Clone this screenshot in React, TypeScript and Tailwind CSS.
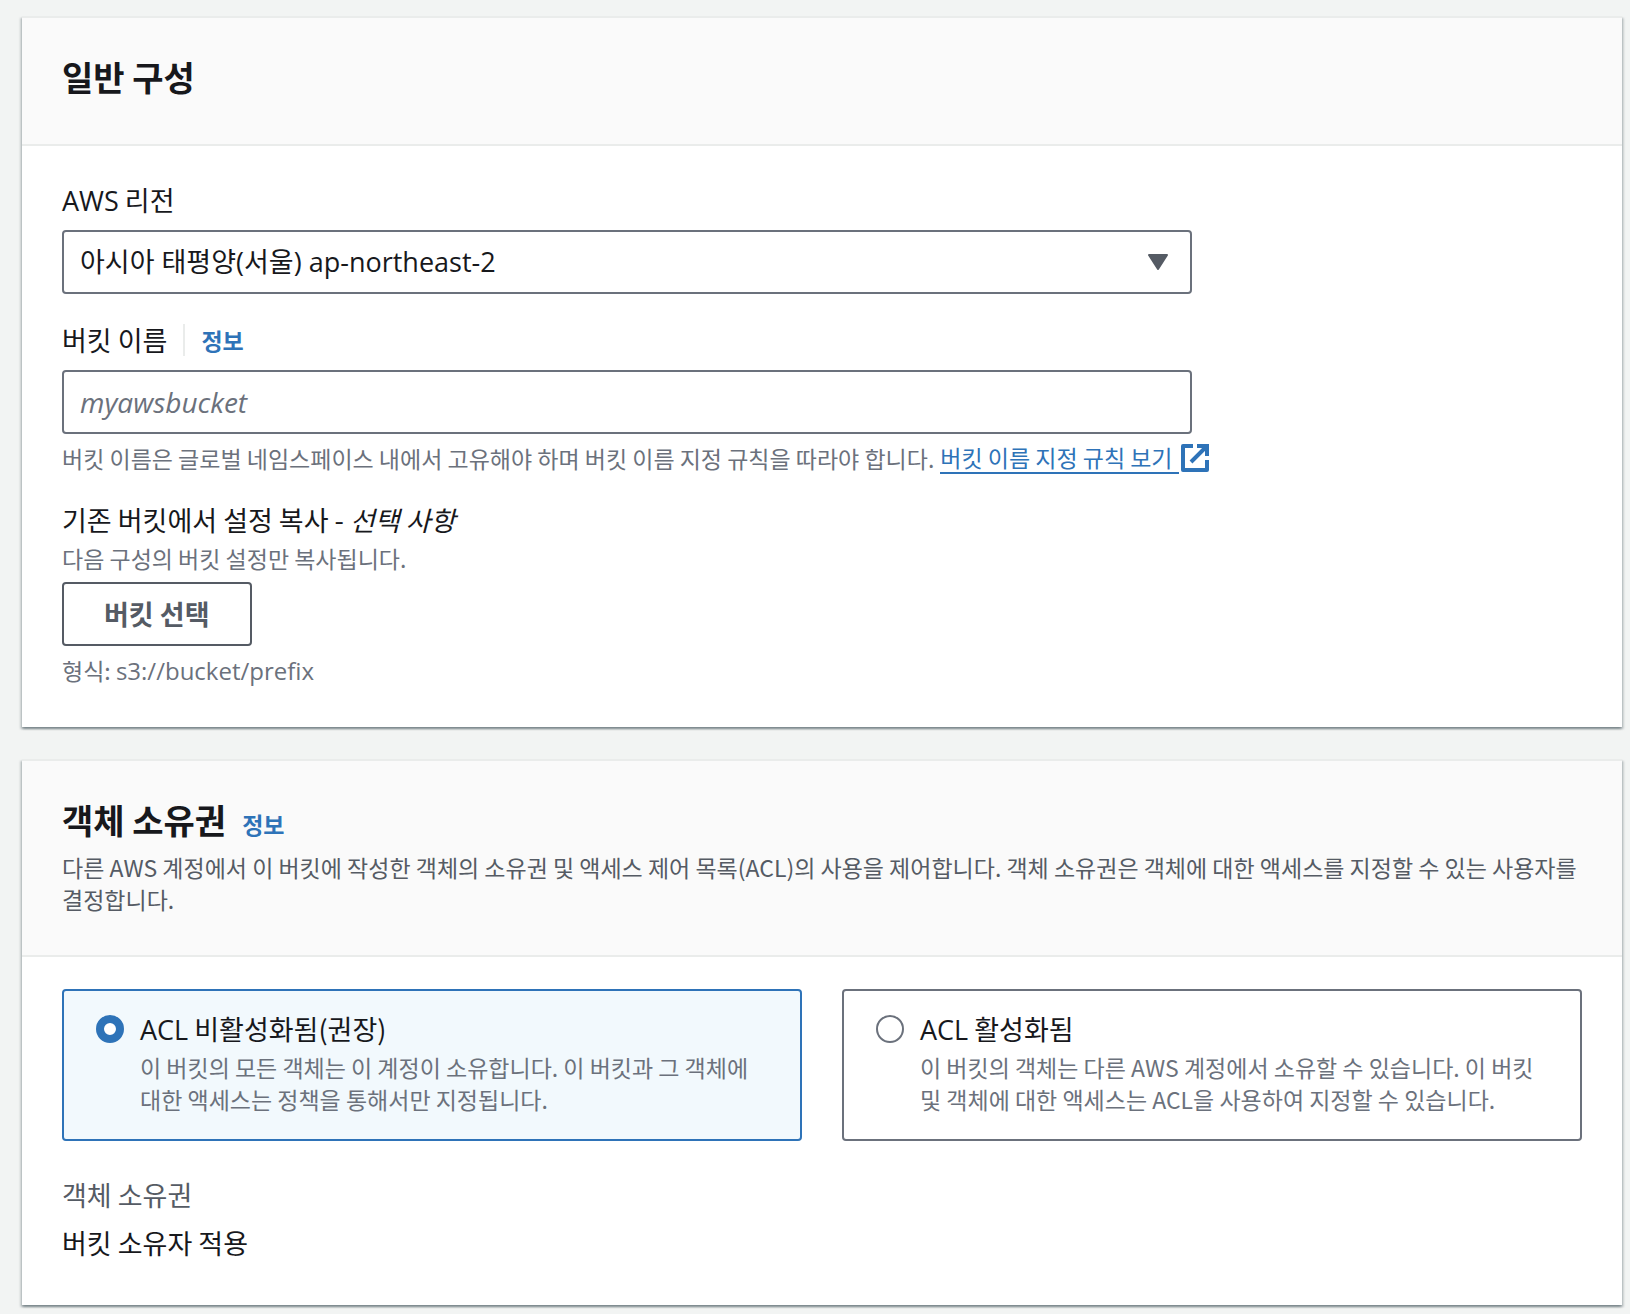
import { useState } from 'react';
import type { ReactNode } from 'react';

interface PanelProps {
  title: string;
  info?: ReactNode;
  description?: string;
  children: ReactNode;
}

// Latin words inside Korean copy
function En({ children }: { children: ReactNode }) {
  return (
    <span lang="en" className="font-['Open_Sans',sans-serif] leading-none">
      {children}
    </span>
  );
}

const OWNERSHIP_OPTIONS = [
  {
    id: 'acl-disabled',
    title: <><En>ACL</En> 비활성화됨(권장)</>,
    description:
      '이 버킷의 모든 객체는 이 계정이 소유합니다. 이 버킷과 그 객체에 대한 액세스는 정책을 통해서만 지정됩니다.',
  },
  {
    id: 'acl-enabled',
    title: <><En>ACL</En> 활성화됨</>,
    description:
      '이 버킷의 객체는 다른 AWS 계정에서 소유할 수 있습니다. 이 버킷 및 객체에 대한 액세스는 ACL을 사용하여 지정할 수 있습니다.',
  },
];

function Panel({ title, info, description, children }: PanelProps) {
  return (
    <section className="border-t-2 border-[#eaeceb] bg-white shadow-[0_2px_2px_0_rgba(0,28,36,0.3),2px_2px_2px_0_rgba(0,28,36,0.15),-2px_2px_2px_0_rgba(0,28,36,0.15)]">
      <header className="border-b-2 border-[#eaeceb] bg-[#fafafa] px-10 pt-8 pb-10">
        <div className="flex items-baseline gap-4">
          <h2 className="text-[34px] leading-[54px] font-bold">{title}</h2>
          {info}
        </div>
        {description && (
          <p className="mt-1 text-[23px] leading-8 break-keep text-[#555b64]">{description}</p>
        )}
      </header>
      <div className="px-10 pt-8 pb-10">{children}</div>
    </section>
  );
}

function InfoLink() {
  return (
    <a href="#info" className="text-[23px] leading-8 font-bold text-[#2e73b8]">
      정보
    </a>
  );
}

function ExternalIcon() {
  return (
    <svg viewBox="0 0 28 28" className="h-7 w-7" fill="none" stroke="currentColor" strokeWidth="4" aria-hidden="true">
      <path d="M12 2H2v24h24V16" strokeLinejoin="round" />
      <path d="M16 2h10v10M25 3L10 18" />
    </svg>
  );
}

export default function App() {
  const [bucketName, setBucketName] = useState('');
  const [ownership, setOwnership] = useState('acl-disabled');

  return (
    <main className="flex min-h-screen flex-col gap-8 bg-[#f2f4f3] pt-4 pr-2 pb-2 pl-[22px] font-['Noto_Sans_CJK_KR',sans-serif] text-[27px] leading-[44px] text-[#17181c]">
      <Panel title="일반 구성">
        <div className="flex w-[calc(75%-10px)] flex-col gap-6">
          <div>
            <label htmlFor="region" className="block">
              <En>AWS</En> 리전
            </label>
            <div className="relative mt-2">
              <select
                id="region"
                className="block h-16 w-full appearance-none rounded-sm border-2 border-[#6b717c] bg-white px-4 font-['Open_Sans','Noto_Sans_CJK_KR',sans-serif]"
              >
                <option>아시아 태평양(서울) ap-northeast-2</option>
              </select>
              <svg
                viewBox="0 0 20 16"
                className="pointer-events-none absolute top-6 right-6 h-4 w-5 text-[#555b64]"
                fill="currentColor"
                stroke="currentColor"
                strokeWidth="2"
                strokeLinejoin="round"
                aria-hidden="true"
              >
                <path d="M1 1h18l-9 14z" />
              </svg>
            </div>
          </div>

          <div>
            <div className="flex items-center gap-4">
              <label htmlFor="bucket-name">버킷 이름</label>
              <span className="flex h-8 items-center border-l-2 border-[#eaeceb] pl-4">
                <InfoLink />
              </span>
            </div>
            <input
              id="bucket-name"
              type="text"
              value={bucketName}
              onChange={(e) => setBucketName(e.target.value)}
              placeholder="myawsbucket"
              className="mt-2 block h-16 w-full rounded-sm border-2 border-[#6b717c] bg-white px-4 font-['Open_Sans','Noto_Sans_CJK_KR',sans-serif] text-[28px] placeholder:text-[#6b717c] placeholder:italic"
            />
            <p className="mt-2 flex items-center text-[23px] leading-8 whitespace-nowrap text-[#6b717c]">
              <span>버킷 이름은 글로벌 네임스페이스 내에서 고유해야 하며 버킷 이름 지정 규칙을 따라야 합니다.</span>
              <a href="#naming-rules" className="ml-1.5 flex items-center gap-0.5 text-[#2e73b8]">
                <span className="h-8 border-b-2 border-[#2e73b8] pr-1.5 leading-[30px]">버킷 이름 지정 규칙 보기</span>
                <ExternalIcon />
              </a>
            </p>
          </div>

          <div>
            <h3>
              기존 버킷에서 설정 복사 - <em>선택 사항</em>
            </h3>
            <p className="text-[23px] leading-8 text-[#6b717c]">다음 구성의 버킷 설정만 복사됩니다.</p>
            <button
              type="button"
              className="mt-2 block h-16 rounded-sm border-2 border-[#555b64] bg-white px-10 font-bold text-[#555b64]"
            >
              버킷 선택
            </button>
            <p className="mt-2 text-[23px] leading-[33px] text-[#6b717c]">
              형식: <span className="font-['Open_Sans',sans-serif] text-2xl leading-none">s3://bucket/prefix</span>
            </p>
          </div>
        </div>
      </Panel>

      <Panel
        title="객체 소유권"
        info={<InfoLink />}
        description="다른 AWS 계정에서 이 버킷에 작성한 객체의 소유권 및 액세스 제어 목록(ACL)의 사용을 제어합니다. 객체 소유권은 객체에 대한 액세스를 지정할 수 있는 사용자를 결정합니다."
      >
        <div role="radiogroup" aria-label="객체 소유권" className="grid grid-cols-2 gap-10">
          {OWNERSHIP_OPTIONS.map((option) => (
            <label
              key={option.id}
              htmlFor={option.id}
              className={`flex gap-4 rounded-sm border-2 px-8 pt-4 pb-6 ${
                ownership === option.id ? 'border-[#2e73b8] bg-[#f2f9fd]' : 'border-[#6b717c] bg-white'
              }`}
            >
              <input
                id={option.id}
                type="radio"
                name="ownership"
                checked={ownership === option.id}
                onChange={() => setOwnership(option.id)}
                className="mt-2 h-7 w-7 shrink-0 appearance-none rounded-full border-2 border-[#6b717c] bg-white checked:border-8 checked:border-[#2e73b8]"
              />
              <span>
                <span className="block">{option.title}</span>
                <span className="block text-[23px] leading-8 break-keep text-[#6b717c]">{option.description}</span>
              </span>
            </label>
          ))}
        </div>
        <dl className="mt-8">
          <dt className="text-[#555b64]">객체 소유권</dt>
          <dd className="mt-1">버킷 소유자 적용</dd>
        </dl>
      </Panel>
    </main>
  );
}
